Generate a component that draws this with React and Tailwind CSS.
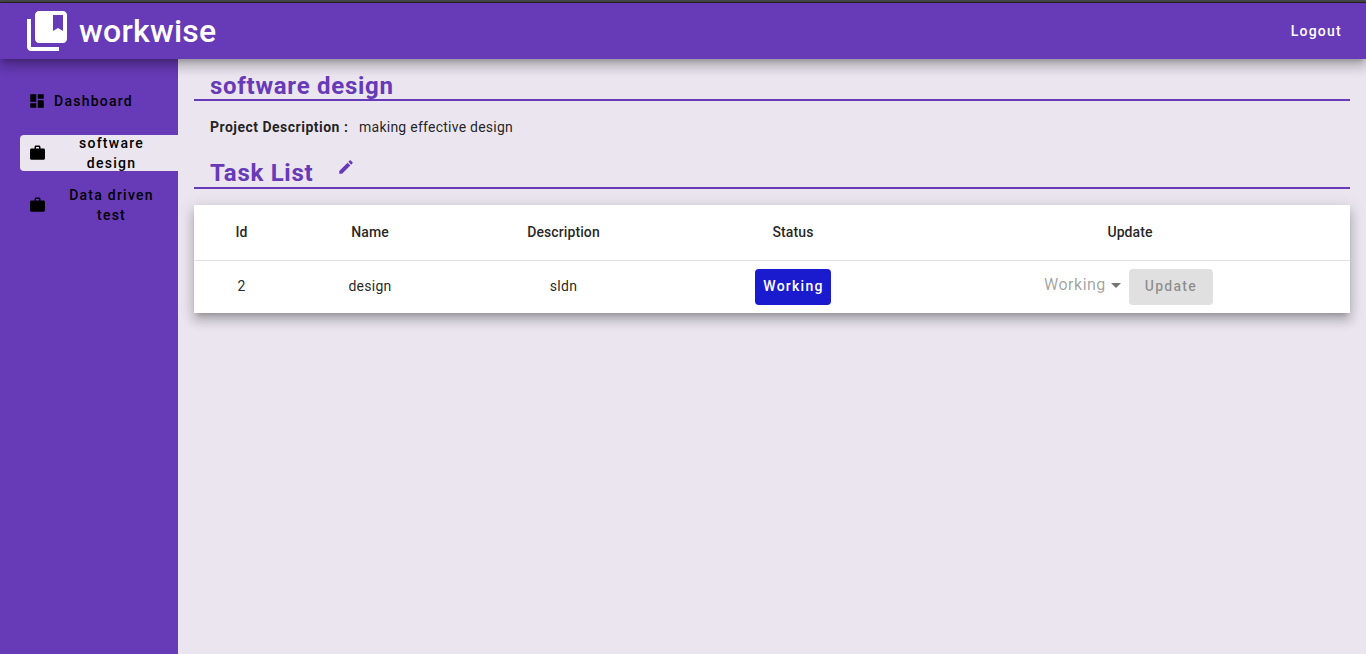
import React from "react";

function Icon({ d, className }) {
  return (
    <svg viewBox="0 0 24 24" fill="currentColor" className={className} aria-hidden="true">
      <path d={d} />
    </svg>
  );
}

const BOOKMARKS =
  "M4 6H2v14c0 1.1.9 2 2 2h14v-2H4V6zM20 2H8c-1.1 0-2 .9-2 2v12c0 1.1.9 2 2 2h12c1.1 0 2-.9 2-2V4c0-1.1-.9-2-2-2zm0 10l-2.5-1.5L15 12V4h5v8z";
const DASHBOARD = "M3 13h8V3H3v10zm0 8h8v-6H3v6zm10 0h8V11h-8v10zm0-18v6h8V3h-8z";
const WORK =
  "M20 6h-4V4c0-1.11-.89-2-2-2h-4c-1.11 0-2 .89-2 2v2H4c-1.11 0-1.99.89-1.99 2L2 19c0 1.11.89 2 2 2h16c1.11 0 2-.89 2-2V8c0-1.11-.89-2-2-2zm-6 0h-4V4h4v2z";
const EDIT =
  "M3 17.25V21h3.75L17.81 9.94l-3.75-3.75L3 17.25zM20.71 7.04c.39-.39.39-1.02 0-1.41l-2.34-2.34c-.39-.39-1.02-.39-1.41 0l-1.83 1.83 3.75 3.75 1.83-1.83z";

function Header() {
  return (
    <header className="relative z-10 flex h-14 shrink-0 items-center justify-between bg-[#673ab7] pl-[23px] pr-6 text-white shadow-[0_5px_5px_-3px_rgba(0,0,0,0.2),0_8px_10px_1px_rgba(0,0,0,0.14),0_3px_14px_2px_rgba(0,0,0,0.12)]">
      <div className="flex items-center">
        <Icon d={BOOKMARKS} className="size-12" />
        <span className="ml-2 text-[32px] font-medium leading-10 tracking-[0.25px]">workwise</span>
      </div>
      <button className="text-sm font-medium tracking-[1.25px]">Logout</button>
    </header>
  );
}

function NavItem({ icon, label, active }) {
  return (
    <button
      className={
        "flex h-9 w-full items-center rounded-l pl-2 text-sm font-medium leading-5 tracking-[1.25px] text-black " +
        (active ? "bg-[#eae5ef]" : "")
      }
    >
      {label === "Dashboard" ? (
        <>
          <Icon d={icon} className="size-[18px] shrink-0" />
          <span className="ml-2">{label}</span>
        </>
      ) : (
        <>
          <Icon d={icon} className="size-[18px] shrink-0 translate-x-[0.5px]" />
          <span className="ml-2 w-[115px] px-3 text-center">{label}</span>
        </>
      )}
    </button>
  );
}

function TaskTable() {
  return (
    <table className="mt-4 w-full table-fixed border-separate border-spacing-0 bg-white text-center text-sm text-black/87 shadow-[0_5px_5px_-3px_rgba(0,0,0,0.2),0_8px_10px_1px_rgba(0,0,0,0.14),0_3px_14px_2px_rgba(0,0,0,0.12)]">
      <colgroup>
        <col className="w-[95px]" />
        <col className="w-[162px]" />
        <col className="w-[225px]" />
        <col className="w-[234px]" />
        <col />
      </colgroup>
      <thead>
        <tr className="h-14">
          {["Id", "Name", "Description", "Status", "Update"].map((h) => (
            <th key={h} className="border-b border-black/12 p-0 pb-px font-medium tracking-[0.1px]">{h}</th>
          ))}
        </tr>
      </thead>
      <tbody>
        <tr className="h-[52px] tracking-[0.25px]">
          <td className="p-0 pb-0.5">2</td>
          <td className="p-0 pb-0.5">design</td>
          <td className="p-0 pb-0.5">sldn</td>
          <td className="p-0">
            <button className="h-9 rounded bg-[#1a1ace] pb-0.5 pl-[8.5px] pr-[7.5px] align-middle font-medium tracking-[1.25px] text-white">
              Working
            </button>
          </td>
          <td className="p-0">
            <div className="flex items-center justify-center pr-[3px]">
              <span className="pb-1 text-base leading-6 tracking-[0.5px] text-black/38">Working</span>
              <svg viewBox="0 0 10 5" className="mb-[3px] ml-[5px] h-[5px] w-2.5 fill-black/54">
                <path d="M0 0h10L5 5z" />
              </svg>
              <button className="ml-2 h-9 rounded bg-[#e0e0e0] px-4 pb-0.5 font-medium tracking-[1.25px] text-black/38">
                Update
              </button>
            </div>
          </td>
        </tr>
      </tbody>
    </table>
  );
}

export default function App() {
  return (
    <div className="flex h-[654px] flex-col overflow-hidden bg-[#eae5ef] font-[Roboto,sans-serif]">
      <div className="h-[3px] shrink-0 border-b border-[#222222] bg-[#484848]" />
      <Header />
      <div className="flex flex-1">
        <nav className="flex w-[178px] shrink-0 flex-col gap-4 bg-[#673ab7] pl-5 pt-6">
          <NavItem icon={DASHBOARD} label="Dashboard" />
          <NavItem icon={WORK} label="software design" active />
          <NavItem icon={WORK} label="Data driven test" />
        </nav>
        <main className="flex-1 px-4 pt-[11px]">
          <h1 className="h-[31px] border-b-2 border-[#673ab7] pl-4 text-2xl font-bold leading-8 tracking-[0.72px] text-[#673ab7]">
            software design
          </h1>
          <p className="mt-4 flex pl-4 text-sm leading-5 tracking-[0.25px] text-black/87">
            <span className="w-[149px] font-bold tracking-[0.49px]">Project Description :</span>
            <span>making effective design</span>
          </p>
          <div className="mt-5 flex h-8 border-b-2 border-[#673ab7] pl-4 text-[#673ab7]">
            <h2 className="w-[127px] text-2xl font-bold leading-8 tracking-[0.72px]">Task List</h2>
            <Icon d={EDIT} className="mt-[1px] size-[18px]" />
          </div>
          <TaskTable />
        </main>
      </div>
    </div>
  );
}
